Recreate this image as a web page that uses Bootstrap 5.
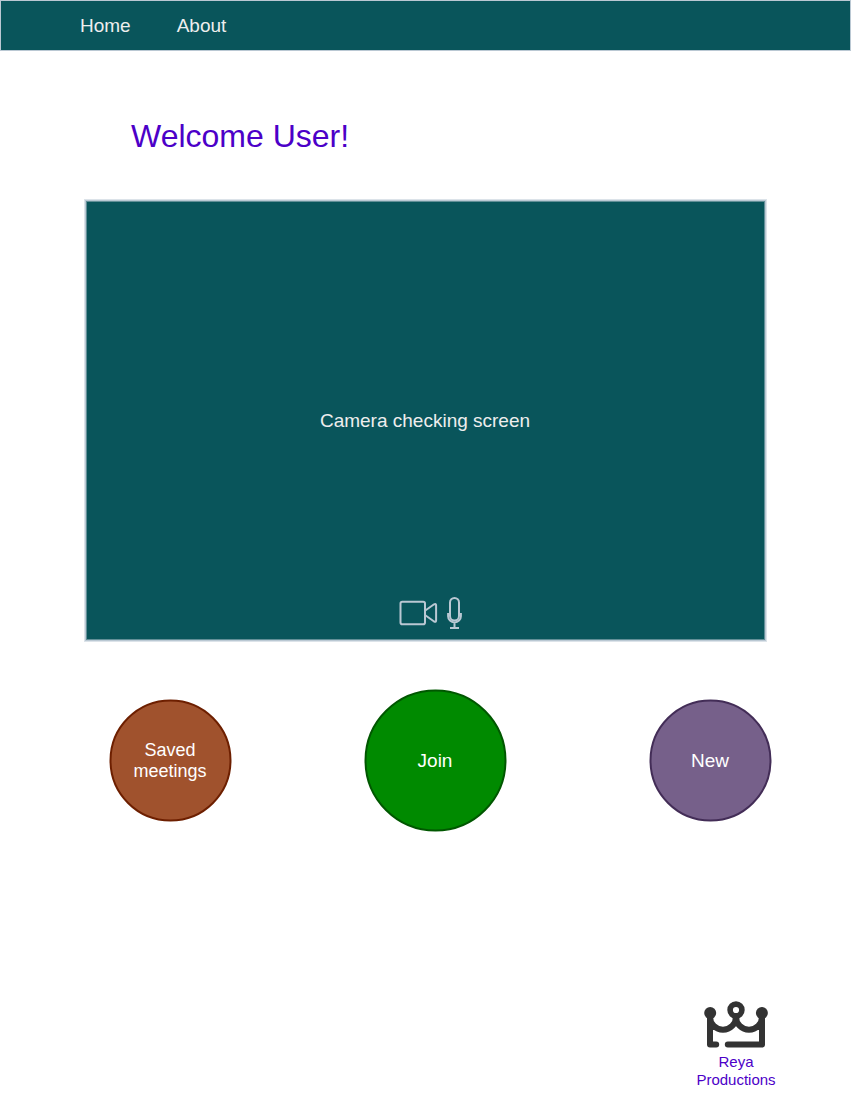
<!DOCTYPE html>
<html lang="en">
<head>
<meta charset="utf-8">
<meta name="viewport" content="width=device-width, initial-scale=1">
<title>Welcome</title>
<link href="https://cdn.jsdelivr.net/npm/bootstrap@5.3.0/dist/css/bootstrap.min.css" rel="stylesheet">
<style>
body{font-family:"Liberation Sans",Arial,sans-serif;font-size:19px;line-height:1.2;color:#eee;background:#fff;width:851px;height:1101px;overflow:hidden}
.topbar{height:51px;background:#09555b;border:1px solid #bac8d3;padding:1px 0 0 79px;gap:46px}
.topbar .nav-link{color:#eee;padding:0}
.hello{font-size:32px;font-weight:400;line-height:38px;color:#4c00c8;margin:66px 0 0 131px}
.screen{width:683px;height:443px;margin:44px 0 0 84px;padding:1px 1px 0 0;background:#09555b;border:1px solid #dce3e9;box-shadow:inset 0 0 0 1px #bac8d3,inset 0 0 0 2px #628f97}
.screen-tools{bottom:9px;left:313px}
.actions{margin:47px 0 0 109px}
.round{width:122px;height:122px;border-width:2px;border-style:solid;color:#fff;padding:0 1px 2px 0;font-size:19px;line-height:21px;transform:translate(.5px,.5px)}
.saved{background:#a0522d;border-color:#6d1f00;font-size:18px;padding-bottom:0}
.join{width:142px;height:142px;background:#008a00;border-color:#005700;margin:0 143px 0 133px}
.fresh{background:#76608a;border-color:#432d57}
.brand{width:100px;margin:168px 0 0 686px;font-size:15px;line-height:18px;color:#4c00c8}
</style>
</head>
<body>
<nav class="topbar d-flex align-items-center">
  <a class="nav-link" href="#">Home</a>
  <a class="nav-link" href="#">About</a>
</nav>
<main>
  <h1 class="hello">Welcome User!</h1>
  <section class="screen position-relative d-flex align-items-center justify-content-center">
    <span>Camera checking screen</span>
    <div class="screen-tools position-absolute d-flex">
      <svg width="66" height="36" viewBox="398 596 66 36" fill="none" stroke="#bac8d3" stroke-width="2">
        <rect x="400.5" y="601.8" width="24.5" height="22.4" rx="1.8"/>
        <path d="M425.3 610.5l8.8-6.2q2-1 2 1v15.2q0 2-2 1l-8.8-6.2" stroke-linejoin="round"/>
        <rect x="450" y="598" width="9" height="22.5" rx="4.5"/>
        <path d="M448.1 613v3.2a6.4 6.2 0 0 0 12.8 0v-3.2M454.5 622v6M450 628h9"/>
      </svg>
    </div>
  </section>
  <section class="actions d-flex align-items-center">
    <button class="round saved rounded-circle">Saved<br>meetings</button>
    <button class="round join rounded-circle">Join</button>
    <button class="round fresh rounded-circle">New</button>
  </section>
</main>
<footer class="brand text-center">
  <svg class="d-block mx-auto" width="68" height="54" viewBox="702 999 68 54" fill="none" stroke="#333" stroke-width="6" stroke-linecap="round" stroke-linejoin="round">
    <path d="M716.2 1044.6H710V1016.8A13 13 0 0 0 736 1016.8A13 13 0 0 0 762 1016.8V1044.6H727.8"/>
    <circle cx="736" cy="1010" r="5.9" stroke-width="5.6"/>
    <g fill="#333" stroke="none"><circle cx="710.2" cy="1013" r="6"/><circle cx="761.9" cy="1013" r="6"/></g>
  </svg>
  <div>Reya<br>Productions</div>
</footer>
<script src="https://cdn.jsdelivr.net/npm/bootstrap@5.3.0/dist/js/bootstrap.bundle.min.js"></script>
</body>
</html>
